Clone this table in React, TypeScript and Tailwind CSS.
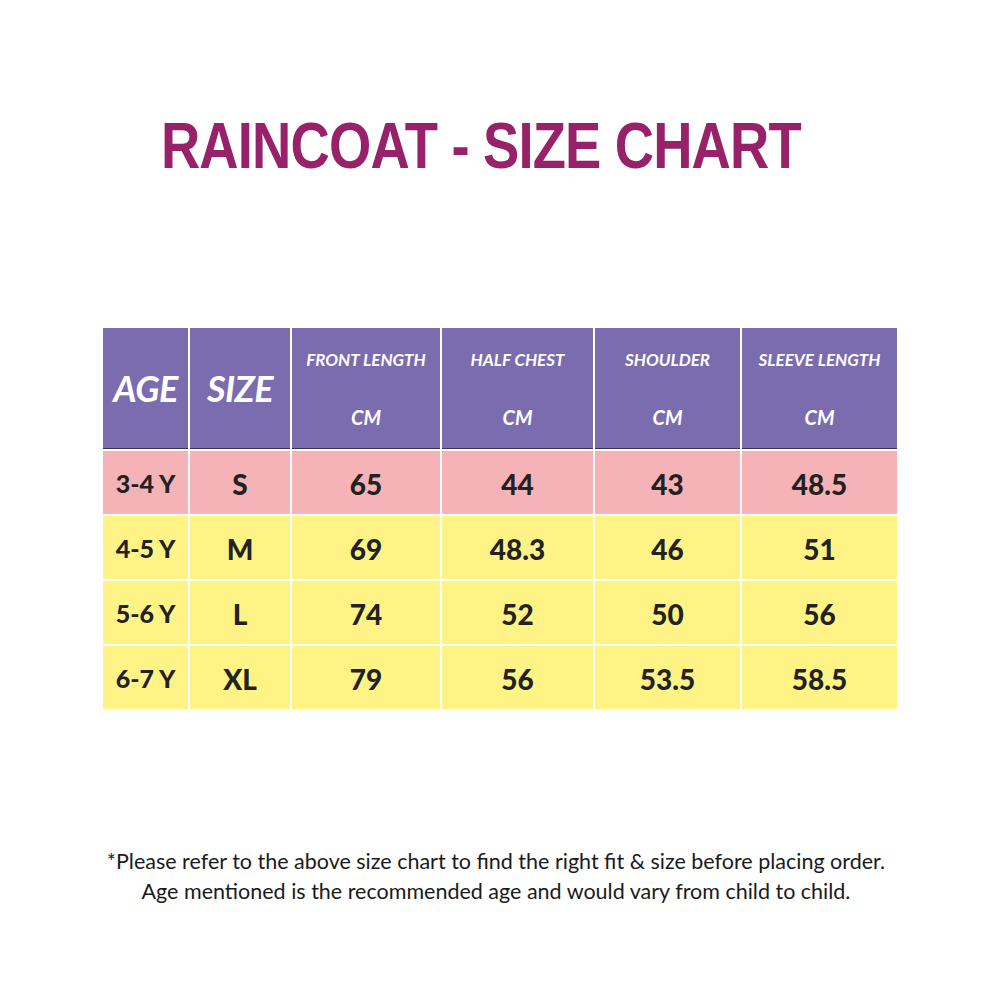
const headers = [
  { label: "FRONT LENGTH" },
  { label: "HALF CHEST" },
  { label: "SHOULDER" },
  { label: "SLEEVE LENGTH" },
];

const rows = [
  { age: "3-4 Y", size: "S", vals: ["65", "44", "43", "48.5"], bg: "bg-[#f5b3b7]" },
  { age: "4-5 Y", size: "M", vals: ["69", "48.3", "46", "51"], bg: "bg-[#fff385]" },
  { age: "5-6 Y", size: "L", vals: ["74", "52", "50", "56"], bg: "bg-[#fff385]" },
  { age: "6-7 Y", size: "XL", vals: ["79", "56", "53.5", "58.5"], bg: "bg-[#fff385]" },
];

const cols = "grid grid-cols-[85px_100px_148px_151px_145px_155px] gap-x-[2px]";

export default function App() {
  return (
    <div className="w-[1000px] h-[1000px] bg-white flex flex-col items-center font-['Lato',sans-serif]">
      <h1 className="mt-[114px] pr-[46px] text-[64px] leading-none font-bold text-[#972269] font-['Liberation_Sans',sans-serif] tracking-[-1px] scale-x-[0.85]">
        RAINCOAT - SIZE CHART
      </h1>

      <div className="mt-[150px] w-[794px] bg-white flex flex-col gap-y-[2px]">
        <div className={cols}>
          <div className="h-[121px] bg-[#7b6cb0] border-b border-[#3a3350] flex items-center justify-center text-white italic font-bold text-[36px] tracking-[-0.5px]">
            AGE
          </div>
          <div className="h-[121px] bg-[#7b6cb0] border-b border-[#3a3350] flex items-center justify-center text-white italic font-bold text-[36px] tracking-[-0.5px]">
            SIZE
          </div>
          {headers.map((h) => (
            <div
              key={h.label}
              className="h-[121px] bg-[#7b6cb0] border-b border-[#3a3350] flex flex-col items-center text-white italic font-bold"
            >
              <span className="mt-[23px] text-[17px] leading-none">{h.label}</span>
              <span className="mt-[39px] text-[20px] leading-none">CM</span>
            </div>
          ))}
        </div>

        {rows.map((r) => (
          <div key={r.age} className={cols}>
            {[r.age, r.size, ...r.vals].map((v, i) => (
              <div
                key={i}
                className={`${r.bg} h-[63px] pt-[3px] flex items-center justify-center font-black text-[#222222] ${
                  i === 0 ? "text-[25px]" : "text-[28px]"
                }`}
              >
                {v}
              </div>
            ))}
          </div>
        ))}
      </div>

      <div className="mt-[137px] pr-[8px] text-center text-[21.5px] leading-[30px] text-[#1a1a1a]">
        <p>*Please refer to the above size chart to find the right fit &amp; size before placing order.</p>
        <p>Age mentioned is the recommended age and would vary from child to child.</p>
      </div>
    </div>
  );
}
